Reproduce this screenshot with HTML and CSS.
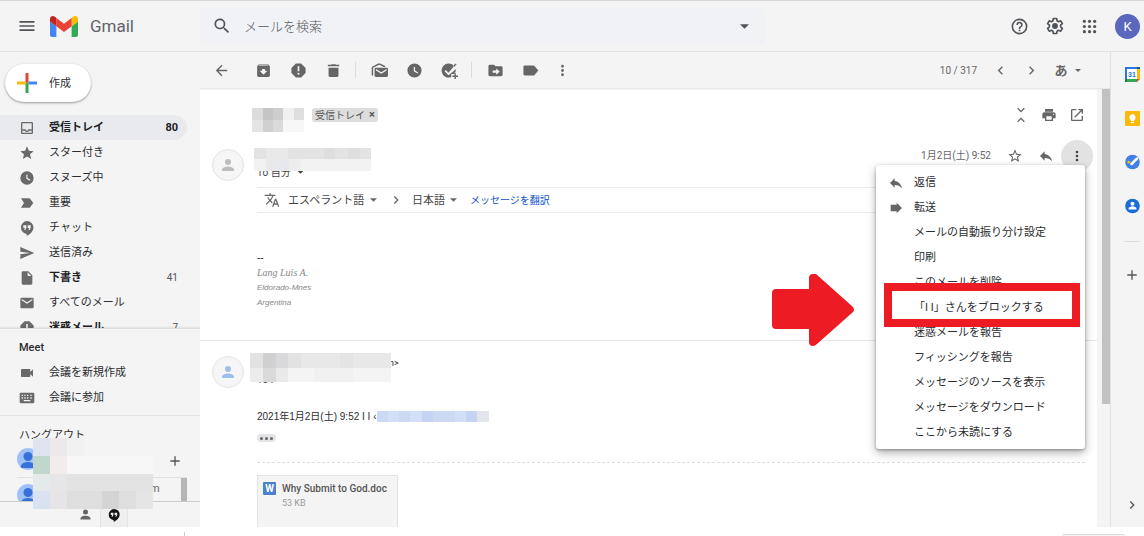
FILE: index.html
```html
<!DOCTYPE html>
<html lang="ja">
<head>
<meta charset="utf-8">
<title>Gmail</title>
<link rel="stylesheet" href="styles.css">
</head>
<body>
<svg class="sprite" aria-hidden="true">
  <symbol id="caret" viewBox="0 0 8 4"><path d="M0 0h8L4 4z"/></symbol>
  <symbol id="person" viewBox="0 0 24 24"><path d="M12 12a4 4 0 1 0 0-8 4 4 0 0 0 0 8zm0 2c-2.700 0-8 1.300-8 4v2h16v-2c0-2.700-5.300-4-8-4z"/></symbol>
  <symbol id="reply" viewBox="0 0 24 24"><path d="M10 9V5l-7 7 7 7v-4.100c5 0 8.500 1.600 11 5.100-1-5-4-10-11-11z"/></symbol>
  <symbol id="more" viewBox="0 0 24 24"><path d="M12 8a2 2 0 1 0 0-4 2 2 0 0 0 0 4zm0 2a2 2 0 1 0 0 4 2 2 0 0 0 0-4zm0 6a2 2 0 1 0 0 4 2 2 0 0 0 0-4z"/></symbol>
  <symbol id="clock" viewBox="0 0 24 24"><path d="M12 2a10 10 0 1 0 0 20 10 10 0 0 0 0-20zm4.200 14.200L11 13V7h1.800v5.100l4.300 2.600z"/></symbol>
  <symbol id="right" viewBox="0 0 24 24"><path d="M10 6 8.600 7.400l4.600 4.600-4.600 4.600L10 18l6-6z"/></symbol>
  <symbol id="plus" viewBox="0 0 24 24"><path d="M19 13h-6v6h-2v-6H5v-2h6V5h2v6h6z"/></symbol>
  <symbol id="spam" viewBox="0 0 24 24"><path d="M15.700 2H8.300L2 8.300v7.400L8.300 22h7.400l6.300-6.300V8.300zM12 18a1.500 1.500 0 1 1 0-3 1.500 1.500 0 0 1 0 3zm1.200-5h-2.400V6h2.400z"/></symbol>
  <symbol id="hangouts" viewBox="0 0 24 24"><path d="M12 1.500a9.800 9.800 0 0 0-.500 19.500v3c5.500-2.600 10.200-7.400 10.200-12.700A9.700 9.700 0 0 0 12 1.500zM11 11.800 9.500 15H7.800l1-3H6.500V8H11zm6.500 0L16 15h-1.700l1-3H13V8h4.500z"/></symbol>
</svg>

<header class="topbar">
  <div class="brand">
    <button class="icon-btn menu-btn" aria-label="メインメニュー"><svg width="20" height="20" viewBox="0 0 24 24"><path d="M3 18h18v-2H3zm0-5h18v-2H3zm0-7v2h18V6z"/></svg></button>
    <svg class="logo" viewBox="52 42 88 66"><path fill="#4285f4" d="M58 108h14V74L52 59v43c0 3.300 2.700 6 6 6"/><path fill="#34a853" d="M120 108h14c3.300 0 6-2.700 6-6V59l-20 15"/><path fill="#fbbc04" d="M120 48v26l20-15v-8c0-7.400-8.500-11.700-14.400-7.200"/><path fill="#ea4335" d="M72 74V48l24 18 24-18v26L96 92"/><path fill="#c5221f" d="M52 51v8l20 15V48l-5.600-4.200C60.500 39.400 52 43.600 52 51"/></svg>
    <span class="brand-name">Gmail</span>
  </div>
  <form class="search">
    <button type="button" class="icon-btn" aria-label="検索"><svg width="20" height="20" viewBox="0 0 24 24"><path d="M15.500 14h-.8l-.3-.3A6.500 6.500 0 1 0 13.700 14.400l.3.300v.8l5 5 1.500-1.500zm-6 0a4.500 4.500 0 1 1 0-9 4.500 4.500 0 0 1 0 9z"/></svg></button>
    <input type="text" placeholder="メールを検索" aria-label="メールを検索">
    <button type="button" class="icon-btn" aria-label="検索オプション"><svg width="9" height="5" viewBox="0 0 8 4"><path d="M0 0h8L4 4z"/></svg></button>
  </form>
  <div class="account">
    <button class="icon-btn" aria-label="サポート"><svg width="19" height="19" viewBox="0 0 24 24"><path d="M11 18h2v-2h-2zm1-16a10 10 0 1 0 0 20 10 10 0 0 0 0-20zm0 18a8 8 0 1 1 0-16 8 8 0 0 1 0 16zm0-14a4 4 0 0 0-4 4h2a2 2 0 1 1 4 0c0 2-3 1.800-3 5h2c0-2.300 3-2.500 3-5a4 4 0 0 0-4-4z"/></svg></button>
    <button class="icon-btn" aria-label="設定"><svg width="20" height="20" viewBox="0 0 24 24"><path fill="none" stroke="currentColor" stroke-width="2" stroke-linejoin="round" d="M10 3h4l.5 2.800 1.700 1 2.700-1 2 3.400-2.200 1.800v2l2.200 1.800-2 3.400-2.700-1-1.700 1L14 21h-4l-.5-2.800-1.700-1-2.700 1-2-3.400L5.300 13v-2L3.100 9.200l2-3.400 2.700 1 1.700-1z"/><circle cx="12" cy="12" r="3.500"/></svg></button>
    <button class="icon-btn" aria-label="Google アプリ"><svg width="19" height="19" viewBox="0 0 24 24"><circle cx="5.500" cy="5.500" r="2"/><circle cx="12" cy="5.500" r="2"/><circle cx="18.500" cy="5.500" r="2"/><circle cx="5.500" cy="12" r="2"/><circle cx="12" cy="12" r="2"/><circle cx="18.500" cy="12" r="2"/><circle cx="5.500" cy="18.500" r="2"/><circle cx="12" cy="18.500" r="2"/><circle cx="18.500" cy="18.500" r="2"/></svg></button>
    <button class="profile" aria-label="Google アカウント">K</button>
  </div>
</header>

<div class="app">
  <aside class="sidebar">
    <button class="compose"><svg width="20" height="20" viewBox="0 0 20 20"><path fill="#ea4335" d="M8.500 0h3v8.500l-3 3z"/><path fill="#fbbc04" d="M0 8.500h8.500v3H0z"/><path fill="#4285f4" d="M11.500 8.500H20v3h-8.500z"/><path fill="#34a853" d="M8.500 11.500l3-3V20h-3z"/></svg>作成</button>
    <nav class="folders">
      <a class="folder active" href="#"><svg viewBox="0 0 24 24"><path d="M19 3H5a2 2 0 0 0-2 2v14c0 1.100.9 2 2 2h14a2 2 0 0 0 2-2V5a2 2 0 0 0-2-2zm0 16H5v-3h3.600a4 4 0 0 0 6.800 0H19zm0-5h-5a2 2 0 1 1-4 0H5V5h14z"/></svg><span>受信トレイ</span><b>80</b></a>
      <a class="folder" href="#"><svg viewBox="0 0 24 24"><path d="m12 17.300 6.200 3.700-1.700-7L22 9.200l-7.200-.6L12 2 9.200 8.600 2 9.200 7.500 14l-1.700 7z"/></svg><span>スター付き</span></a>
      <a class="folder" href="#"><svg viewBox="0 0 24 24"><use href="#clock"/></svg><span>スヌーズ中</span></a>
      <a class="folder" href="#"><svg viewBox="0 0 24 24"><path d="M3 19h12c.7 0 1.300-.3 1.600-.8L21.500 12l-4.900-6.200A2 2 0 0 0 15 5H3l4.500 7z"/></svg><span>重要</span></a>
      <a class="folder" href="#"><svg viewBox="0 0 24 24"><use href="#hangouts"/></svg><span>チャット</span></a>
      <a class="folder" href="#"><svg viewBox="0 0 24 24"><path d="M2 21 23 12 2 3v7l15 2-15 2z"/></svg><span>送信済み</span></a>
      <a class="folder unread" href="#"><svg viewBox="0 0 24 24"><path d="M14 2H6a2 2 0 0 0-2 2v16c0 1.100.9 2 2 2h12a2 2 0 0 0 2-2V8zm-1 7V3.500L18.500 9z"/></svg><span>下書き</span><i>41</i></a>
      <a class="folder" href="#"><svg viewBox="0 0 24 24"><path d="M20 4H4a2 2 0 0 0-2 2v12c0 1.100.9 2 2 2h16a2 2 0 0 0 2-2V6a2 2 0 0 0-2-2zm0 4-8 5-8-5V6l8 5 8-5z"/></svg><span>すべてのメール</span></a>
      <a class="folder unread" href="#"><svg viewBox="0 0 24 24"><use href="#spam"/></svg><span>迷惑メール</span><i>7</i></a>
    </nav>
    <section class="meet">
      <h2>Meet</h2>
      <a class="folder" href="#"><svg viewBox="0 0 24 24"><path d="M17 10.500V7a1 1 0 0 0-1-1H4a1 1 0 0 0-1 1v10c0 .6.400 1 1 1h12c.6 0 1-.4 1-1v-3.500l4 4v-11z"/></svg><span>会議を新規作成</span></a>
      <a class="folder" href="#"><svg viewBox="0 0 24 24"><path fill-rule="evenodd" d="M3 4h18a2 2 0 0 1 2 2v12a2 2 0 0 1-2 2H3a2 2 0 0 1-2-2V6c0-1.100.9-2 2-2zm1 3v2h2V7zm4 0v2h2V7zm4 0v2h2V7zm5 0v2h2V7zM4 11v2h2v-2zm4 0v2h2v-2zm4 0v2h2v-2zm5 0v2h2v-2zM7 15v2h10v-2z"/></svg><span>会議に参加</span></a>
    </section>
    <section class="hangouts">
      <h2>ハングアウト</h2>
      <div class="contacts">
        <div class="contact"><span class="face"><svg viewBox="0 0 22 22"><circle cx="11" cy="8.500" r="4.500"/><path d="M3.500 20c0-8 15-8 15 0z"/></svg></span><button class="icon-btn" aria-label="新しい会話"><svg width="16" height="16"><use href="#plus"/></svg></button></div>
        <div class="contact second"><span class="face"><svg viewBox="0 0 22 22"><circle cx="11" cy="8.500" r="4.500"/><path d="M3.500 20c0-8 15-8 15 0z"/></svg></span><span class="tail">m</span><span class="thumb"></span></div>
      </div>
      <svg class="mosaic" width="120" height="71" viewBox="0 0 120 71" shape-rendering="crispEdges"><path fill="#f4f4f4" d="M0 0h120v71H0z"/><path fill="#e0e4f0" d="M0 0h17v18H0z"/><path fill="#ede9ea" d="M17 0h17v18H17z"/><path fill="#f1f1f1" d="M34 0h17v18H34z"/><path fill="#c1d7cd" d="M0 18h17v18H0z"/><path fill="#f2edec" d="M17 18h17v18H17z"/><path fill="#f7f7f7" d="M34 18h86v18H34z"/><path fill="#e4eae9" d="M0 36h17v17H0z"/><path fill="#e6e6e8" d="M17 36h17v17H17z"/><path fill="#e3e3e3" d="M34 36h86v17H34z"/><path fill="#dae2f2" d="M0 53h17v18H0z"/><path fill="#e6e4e6" d="M17 53h17v18H17z"/><path fill="#dedede" d="M34 53h35v18H34z"/><path fill="#d4d4d4" d="M69 53h17v18H69z"/><path fill="#dedede" d="M86 53h17v18H86z"/><path fill="#e5e5e5" d="M103 53h17v18h-17z"/></svg>
    </section>
    <div class="tabs">
      <button class="icon-btn" aria-label="連絡先"><svg width="15" height="15"><use href="#person"/></svg></button>
      <button class="icon-btn on" aria-label="ハングアウト"><svg width="14" height="14"><use href="#hangouts"/></svg></button>
    </div>
  </aside>

  <main class="main">
    <div class="toolbar">
      <button class="icon-btn back" aria-label="戻る"><svg viewBox="0 0 24 24"><path d="M20 11H7.800l5.600-5.600L12 4l-8 8 8 8 1.400-1.400L7.800 13H20z"/></svg></button>
      <button class="icon-btn" aria-label="アーカイブ"><svg viewBox="0 0 24 24"><path fill-rule="evenodd" d="M5.500 3h13L21 6v13a2 2 0 0 1-2 2H5a2 2 0 0 1-2-2V6zm.4 1-.9 1h14l-1-1zM12 18l5.500-5.500H14V10h-4v2.500H6.500z"/></svg></button>
      <button class="icon-btn" aria-label="迷惑メールを報告"><svg><use href="#spam"/></svg></button>
      <button class="icon-btn" aria-label="削除"><svg viewBox="0 0 24 24"><path d="M5 8h14v11a2 2 0 0 1-2 2H7a2 2 0 0 1-2-2zm10.500-4-1-1h-5l-1 1H4v2h16V4z"/></svg></button>
      <span class="sep"></span>
      <button class="icon-btn" aria-label="未読にする"><svg viewBox="0 0 24 24"><path d="M22 8H7a2 2 0 0 0-2 2v9c0 1.100.9 2 2 2h15a2 2 0 0 0 2-2v-9a2 2 0 0 0-2-2zm0 4-7.500 4.500L7 12v-2l7.500 4.500L22 10zM3 19H1V7l9-5h3l7 3.500V7h-2l-6.500-3L3 8z"/></svg></button>
      <button class="icon-btn" aria-label="スヌーズ"><svg><use href="#clock"/></svg></button>
      <button class="icon-btn" aria-label="ToDo リストに追加"><svg viewBox="0 0 24 24"><path fill-rule="evenodd" d="M11 2a10 10 0 1 0 3.500 19.300V17h4.300v-2H20a10 10 0 0 0 .8-5L18 12.800l-7.500 6L5 13l1.800-1.800 3.700 3.800L18 6.500V5a10 10 0 0 0-7-3zM20.500 2 22 3.500l-4 4L16.500 6zM19 16h2v3h3v2h-3v3h-2v-3h-3v-2h3z"/></svg></button>
      <span class="sep"></span>
      <button class="icon-btn" aria-label="移動"><svg viewBox="0 0 24 24"><path d="M20 6h-8l-2-2H4a2 2 0 0 0-2 2v12c0 1.100.9 2 2 2h16a2 2 0 0 0 2-2V8a2 2 0 0 0-2-2zm-7 12v-3H8v-3h5V9l5 4.500z"/></svg></button>
      <button class="icon-btn" aria-label="ラベル"><svg viewBox="0 0 24 24"><path d="M17.600 5.800A2 2 0 0 0 16 5H4a2 2 0 0 0-2 2v10c0 1.100.9 2 2 2h12c.7 0 1.300-.3 1.600-.8L23 12z"/></svg></button>
      <button class="icon-btn narrow" aria-label="その他"><svg><use href="#more"/></svg></button>
      <span class="pager">10 / 317</span>
      <button class="icon-btn nav-btn" aria-label="新しい"><svg viewBox="0 0 24 24"><path d="M15.400 7.400 14 6l-6 6 6 6 1.400-1.400-4.600-4.600z"/></svg></button>
      <button class="icon-btn nav-btn" aria-label="古い"><svg><use href="#right"/></svg></button>
      <button class="icon-btn ime">あ<svg class="caret"><use href="#caret"/></svg></button>
    </div>

    <div class="reader">
      <div class="paper">
        <div class="subject">
          <svg width="52" height="24" viewBox="0 0 52 24" shape-rendering="crispEdges"><path fill="#dcdcdc" d="M0 0h11v12H0z"/><path fill="#c5c5c5" d="M11 0h10v12H11z"/><path fill="#cecece" d="M21 0h10v12H21z"/><path fill="#f0f0f0" d="M31 0h11v12H31z"/><path fill="#dedede" d="M42 0h10v12H42z"/><path fill="#e4e4e4" d="M0 12h11v12H0z"/><path fill="#d0d0d0" d="M11 12h10v12H11z"/><path fill="#dadada" d="M21 12h10v12H21z"/><path fill="#f7f7f7" d="M31 12h21v12H31z"/></svg>
          <span class="chip">受信トレイ<button aria-label="ラベルを削除">×</button></span>
          <div class="actions">
            <button class="icon-btn" aria-label="すべて折りたたむ"><svg viewBox="0 0 24 24"><path fill="none" stroke="currentColor" stroke-width="2" d="m7 2 5 5 5-5M7 22l5-5 5 5"/></svg></button>
            <button class="icon-btn" aria-label="すべて印刷"><svg viewBox="0 0 24 24"><path d="M19 8H5a3 3 0 0 0-3 3v6h4v4h12v-4h4v-6a3 3 0 0 0-3-3zm-3 11H8v-5h8zm3-7a1 1 0 1 1 0-2 1 1 0 0 1 0 2zm-1-9H6v4h12z"/></svg></button>
            <button class="icon-btn" aria-label="新しいウィンドウで開く"><svg viewBox="0 0 24 24"><path d="M19 19H5V5h6V3H5a2 2 0 0 0-2 2v14c0 1.100.9 2 2 2h14a2 2 0 0 0 2-2v-6h-2zM14 3v2h3.600l-9.800 9.800 1.400 1.400L19 6.400V10h2V3z"/></svg></button>
          </div>
        </div>

        <article class="message">
          <header class="msg-head">
            <span class="avatar"><svg><use href="#person"/></svg></span>
            <div class="sender">
              <div class="from"></div>
              <button class="to">To 自分<svg class="caret"><use href="#caret"/></svg></button>
              <svg class="mosaic" width="117" height="23" viewBox="0 0 117 23" shape-rendering="crispEdges"><path fill="#e3e3e3" d="M0 0h117v11H0z"/><path fill="#e9e9e9" d="M12 0h22v11H12z"/><path fill="#dedede" d="M70 0h11v11H70zM94 0h12v11H94z"/><path fill="#f2f2f2" d="M0 11h117v12H0z"/><path fill="#e9e9eb" d="M12 11h12v12H12z"/><path fill="#e7e8ee" d="M24 11h11v12H24z"/><path fill="#ededed" d="M35 11h12v12H35z"/></svg>
            </div>
            <div class="meta">
              <time>1月2日(土) 9:52</time>
              <button class="icon-btn" aria-label="スター"><svg viewBox="0 0 24 24"><path d="m22 9.200-7.200-.6L12 2 9.200 8.600 2 9.200 7.500 14l-1.700 7 6.200-3.700 6.200 3.700-1.600-7zm-10 6.200-3.800 2.300 1-4.300-3.300-2.900 4.400-.4L12 6.100l1.700 4 4.400.4-3.300 2.900 1 4.300z"/></svg></button>
              <button class="icon-btn" aria-label="返信"><svg><use href="#reply"/></svg></button>
              <div class="more-wrap">
                <button class="icon-btn more-btn" aria-label="その他"><svg><use href="#more"/></svg></button>
                <div class="menu" role="menu">
                  <button role="menuitem"><svg><use href="#reply"/></svg>返信</button>
                  <button role="menuitem"><svg viewBox="0 0 24 24"><path d="M13 4v3H4v10h9v3l8-8z"/></svg>転送</button>
                  <button role="menuitem">メールの自動振り分け設定</button>
                  <button role="menuitem">印刷</button>
                  <button role="menuitem">このメールを削除</button>
                  <button role="menuitem" class="block">「I I」さんをブロックする</button>
                  <button role="menuitem">迷惑メールを報告</button>
                  <button role="menuitem">フィッシングを報告</button>
                  <button role="menuitem">メッセージのソースを表示</button>
                  <button role="menuitem">メッセージをダウンロード</button>
                  <button role="menuitem">ここから未読にする</button>
                  <svg class="pointer" viewBox="0 0 82 72"><path fill="#ed1c24" d="M4 15h33V4q0-4 4-4h3l37 33q2 3 0 5L45 70q-2 2-4 2-4 0-4-4V55H4q-4 0-4-4V19q0-4 4-4z"/></svg>
                </div>
              </div>
            </div>
          </header>
          <div class="translate">
            <svg width="16" height="16" viewBox="0 0 24 24"><path d="m12.900 15.100-2.600-2.500A17.500 17.500 0 0 0 14 6h3V4h-7V2H8v2H1v2h11.200A16 16 0 0 1 9 11.400 15.700 15.700 0 0 1 6.700 8h-2c.7 1.600 1.700 3.200 3 4.600l-5.100 5L4 19l5-5 3.100 3.100zM18.500 10h-2L12 22h2l1.100-3h4.800l1.100 3h2zm-2.600 7 1.600-4.300 1.600 4.300z"/></svg>
            <label class="picker"><select aria-label="翻訳元の言語"><option>エスペラント語</option></select><svg class="caret"><use href="#caret"/></svg></label>
            <svg class="arrow" width="16" height="16"><use href="#right"/></svg>
            <label class="picker"><select aria-label="翻訳先の言語"><option>日本語</option></select><svg class="caret"><use href="#caret"/></svg></label>
            <a href="#">メッセージを翻訳</a>
          </div>
          <div class="msg-body signature">
            <p class="dashes">--</p>
            <p class="name">Lang Luis A.</p>
            <p>Eldorado-Mnes</p>
            <p>Argentina</p>
          </div>
        </article>

        <article class="message next">
          <header class="msg-head">
            <span class="avatar blue"><svg><use href="#person"/></svg></span>
            <div class="sender">
              <div class="from">m&gt;</div>
              <div class="to">To :</div>
              <svg class="mosaic" width="141" height="29" viewBox="0 0 141 29" shape-rendering="crispEdges"><path fill="#e8e8e8" d="M0 0h141v15H0z"/><path fill="#e2e2e2" d="M0 0h13v15H0z"/><path fill="#d0d0d0" d="M13 0h13v15H13z"/><path fill="#d9d9dc" d="M26 0h12v15H26z"/><path fill="#e2e2e2" d="M38 0h13v15H38z"/><path fill="#e4e4e4" d="M90 0h13v15H90z"/><path fill="#f4f4f4" d="M0 15h141v14H0z"/><path fill="#ececec" d="M0 15h13v14H0z"/><path fill="#dadada" d="M13 15h13v14H13z"/><path fill="#e9e9e9" d="M26 15h12v14H26z"/><path fill="#f0f0f0" d="M64 15h39v14H64z"/></svg>
            </div>
          </header>
          <div class="msg-body quoted">
            <p>2021年1月2日(土) 9:52 I I ‹<svg class="address" width="112" height="11" viewBox="0 0 112 11" shape-rendering="crispEdges"><path fill="#ccd9f2" d="M0 0h112v11H0z"/><path fill="#d3dff6" d="M11 0h11v11H11zM33 0h12v11H33zM78 0h11v11H78z"/><path fill="#c5d4f2" d="M45 0h11v11H45zM89 0h11v11H89z"/><path fill="#e3e5ec" d="M100 0h12v11h-12z"/></svg></p>
            <button class="ellipsis" aria-label="省略部分を表示"><span></span><span></span><span></span></button>
          </div>
          <div class="attachments">
            <a class="file" href="#"><span class="doc">W</span><span><strong>Why Submit to God.doc</strong><small>53 KB</small></span></a>
          </div>
        </article>
      </div>
      <div class="scrollbar"><span></span></div>
    </div>
  </main>

  <aside class="addons">
    <button class="icon-btn" aria-label="カレンダー"><svg viewBox="0 0 16 16"><path fill="#2a75e0" d="M1 1h12v2H3v10H1z"/><path fill="#1554ae" d="M13 1h3v2h-3z"/><path fill="#fbbc04" d="M13 3h3v10h-3z"/><path fill="#34a853" d="M3 13h10v3H3z"/><path fill="#188038" d="M1 13h2v3H1z"/><path fill="#ea4335" d="M13 13h3l-3 3z"/><path fill="#fff" d="M3 3h10v10H3z"/><text x="8" y="11" text-anchor="middle">31</text></svg></button>
    <button class="icon-btn" aria-label="Keep"><svg viewBox="0 0 16 16"><rect x="1" y="1" width="15" height="15" rx="1" fill="#fbb90a"/><path fill="#fff" d="M8.500 4a3.300 3.300 0 0 0-1.700 6v1h3.400v-1a3.300 3.300 0 0 0-1.700-6zM7 12h3v1H7z"/></svg></button>
    <button class="icon-btn" aria-label="ToDo リスト"><svg viewBox="0 0 16 16"><circle cx="8.500" cy="8" r="7.300" fill="#4280e8"/><path stroke="#fff" stroke-width="2.500" stroke-linecap="round" d="m7.500 10 5.500-5.500"/><circle cx="4.800" cy="8.200" r="1.400" fill="#fbbc04"/></svg></button>
    <button class="icon-btn" aria-label="連絡先"><svg viewBox="0 0 16 16"><circle cx="8.500" cy="8" r="7.300" fill="#1a6dd8"/><circle cx="8.500" cy="5.800" r="2" fill="#fff"/><path fill="#fff" d="M4.500 11c0-3.600 8-3.600 8 0v.5h-8z"/></svg></button>
    <hr>
    <button class="icon-btn add" aria-label="アドオンを取得"><svg><use href="#plus"/></svg></button>
    <button class="icon-btn collapse" aria-label="サイドパネルを非表示"><svg><use href="#right"/></svg></button>
  </aside>
</div>
<div class="edge"><span class="tick"></span><span class="tab"></span></div>
</body>
</html>
```

FILE: styles.css
```css
* { box-sizing: border-box; }

body {
  margin: 0;
  height: 100vh;
  display: flex;
  flex-direction: column;
  overflow: hidden;
  background: #fff;
  color: #2c2d30;
  font: 400 11px/15px Roboto, "Noto Sans CJK JP", sans-serif;
}

button, input, select { font: inherit; color: inherit; }
button { padding: 0; border: 0; background: none; }
a { color: inherit; text-decoration: none; }
p, h2 { margin: 0; }
svg { display: block; flex: none; fill: currentColor; }
.sprite { display: none; }
.caret { width: 7px; height: 4px; }
.mosaic { position: absolute; }

.icon-btn {
  display: flex;
  flex: none;
  align-items: center;
  justify-content: center;
}

/* Top bar */
.topbar {
  flex: none;
  display: flex;
  align-items: center;
  height: 52px;
  border-top: 1px solid #d2d5da;
  border-bottom: 1px solid #e3e4e8;
  background: #f4f4f4;
  color: #505357;
}
.brand { display: flex; align-items: center; width: 200px; flex: none; }
.menu-btn { margin-left: 17px; }
.logo { width: 28px; height: 21px; margin-left: 13px; }
.brand-name { margin-left: 12px; font-size: 17px; line-height: 20px; color: #5f6368; }
.search {
  display: flex;
  align-items: center;
  flex: 0 1 565px;
  height: 36px;
  padding: 0 12px;
  border-radius: 4px;
  background: #f1f2f5;
}
.search input {
  flex: 1;
  min-width: 0;
  margin-left: 12px;
  padding: 0;
  border: 0;
  outline: 0;
  background: none;
  font-size: 13px;
  font-weight: 300;
}
.search input::placeholder { color: #54575b; opacity: 1; }
.search .icon-btn:last-child { width: 18px; }
.account { display: flex; align-items: center; margin-left: auto; padding-right: 4px; }
.account .icon-btn { width: 35px; height: 35px; }
.profile {
  width: 25px;
  height: 25px;
  margin-left: 8px;
  border-radius: 50%;
  background: #5a67bd;
  color: #fff;
  font-size: 13px;
}

.app { flex: 1; display: flex; min-height: 0; }

/* Sidebar */
.sidebar {
  display: flex;
  flex-direction: column;
  width: 200px;
  flex: none;
  background: #f4f4f4;
}
.compose {
  display: flex;
  align-items: center;
  align-self: flex-start;
  flex: none;
  gap: 12px;
  height: 38px;
  margin: 12px 0 13px 5px;
  padding: 0 20px 0 12px;
  border-radius: 19px;
  background: #fff;
  box-shadow: 0 1px 2px rgba(60, 64, 67, .4), 0 1px 3px rgba(60, 64, 67, .15);
}
.folders { flex: 1; min-height: 0; overflow: hidden; }
.folder {
  display: flex;
  align-items: center;
  gap: 14px;
  height: 25px;
  margin-right: 13px;
  padding: 0 9px 0 19px;
}
.folder svg { width: 16px; height: 16px; color: #6a6a6a; }
.folder span { flex: 1; white-space: nowrap; }
.folder b, .folder i { font-style: normal; font-weight: 400; color: #555; }
.folder i { font-size: 10px; }
.folder.active { border-radius: 0 13px 13px 0; background: #e8eaed; }
.active span, .unread span, .folder.active b { font-weight: 700; color: #202124; }
.meet {
  padding: 6px 0 5px;
  border-top: 1px solid #dcdde0;
  border-bottom: 1px solid #dfe1e5;
  box-shadow: 0 -1px 2px rgba(0, 0, 0, .08);
}
.sidebar h2 { height: 25px; padding-left: 19px; font-size: 11px; font-weight: 500; line-height: 25px; }
.hangouts { position: relative; padding-top: 7px; }
.sidebar .hangouts h2 { font-weight: 400; }
.contacts { height: 53px; padding-left: 17px; overflow: hidden; }
.contact { display: flex; align-items: center; height: 29px; padding-right: 17px; padding-bottom: 7px; }
.contact .icon-btn { margin-left: auto; padding-top: 3px; color: #555; }
.contact.second {
  align-items: flex-start;
  height: 24px;
  padding: 6px 0 0;
  margin-right: 13px;
  border-top: 1px solid #dfe1e5;
}
.face { width: 22px; height: 22px; border-radius: 50%; background: #a0c1f8; color: #3770d8; overflow: hidden; flex: none; }
.tail { margin: -3px 0 0 111px; color: #666; }
.thumb { width: 6px; height: 24px; margin: -6px 0 0 auto; background: #b5b5b5; }
.hangouts .mosaic { left: 33px; top: 22px; z-index: 1; }
.tabs {
  display: flex;
  height: 26px;
  padding-left: 70px;
  border-top: 1px solid #ccc;
}
.tabs .icon-btn { width: 30px; color: #666; }
.tabs .on { width: 28px; color: #111; border: 1px solid #e4e4e4; border-width: 0 1px; background: #efefef; }

/* Toolbar */
.main { flex: 1; min-width: 0; display: flex; flex-direction: column; }
.toolbar {
  display: flex;
  align-items: center;
  flex: none;
  height: 37px;
  padding-left: 4px;
  padding-right: 29px;
  border-bottom: 1px solid #e6e7ea;
  background: #f4f4f4;
  color: #666;
}
.toolbar .icon-btn { width: 35px; height: 30px; }
.toolbar svg { width: 17px; height: 17px; }
.toolbar .back { width: 34px; margin-right: 8px; }
.toolbar .narrow { width: 28px; }
.sep { width: 1px; height: 16px; margin: 0 6px 0 4px; background: #dcdcdc; }
.pager { margin-left: auto; margin-right: 8px; font-size: 10px; }
.toolbar .nav-btn { width: 31px; }
.toolbar .ime { gap: 7px; margin-left: 7px; width: 27px; font-size: 13px; font-weight: 700; }
.toolbar .caret { width: 6px; height: 3px; }

/* Reading pane */
.reader { flex: 1; min-height: 0; display: flex; overflow: hidden; background: #f4f4f4; }
.paper { flex: 1; min-width: 0; margin-top: 1px; background: #fff; }
.scrollbar { width: 13px; flex: none; padding-left: 5px; }
.scrollbar span { display: block; height: 72%; background: #c1c1c1; }
.subject { display: flex; align-items: center; height: 50px; padding: 0 6px 0 52px; gap: 8px; }
.subject > svg { margin-top: 10px; }
.chip {
  display: flex;
  align-items: center;
  gap: 4px;
  height: 14px;
  padding: 0 3px;
  border-radius: 3px;
  background: #ddd;
  color: #555;
  font-size: 10px;
}
.chip button { line-height: 14px; font-size: 11px; font-weight: 700; }
.actions { display: flex; margin-left: auto; color: #666; }
.actions .icon-btn { width: 28px; }
.actions svg, .meta svg { width: 16px; height: 16px; }

.message { display: flex; flex-direction: column; }
.message.next { border-top: 1px solid #e6e6e6; }
.msg-head { display: flex; height: 47px; padding: 0 4px 0 12px; }
.avatar {
  display: flex;
  align-items: center;
  justify-content: center;
  flex: none;
  width: 32px;
  height: 32px;
  margin-top: 9px;
  border: 1px solid #e4e4e6;
  border-radius: 50%;
  background: #f6f6f6;
  color: #bdbdbd;
}
.avatar svg { width: 18px; height: 18px; }
.avatar.blue { margin-top: 15px; color: #9dbcf0; }
.sender { position: relative; margin-left: 13px; padding-top: 9px; }
.from { height: 15px; }
.to { display: flex; align-items: center; gap: 6px; height: 16px; font-size: 10px; color: #444; }
.sender .mosaic { left: -3px; top: 8px; }
.next .sender { padding-top: 15px; }
.next .from { padding-left: 129px; font-size: 9px; }
.next .sender .mosaic { left: -7px; top: 12px; }
.meta { display: flex; align-items: flex-start; margin-left: auto; color: #666; }
.meta time { margin-right: 8px; font-size: 10px; line-height: 32px; }
.meta .icon-btn { width: 31px; height: 32px; }
.more-wrap { position: relative; }
.meta .more-btn { width: 32px; border-radius: 50%; background: #e2e2e2; color: #444; }

.menu {
  position: absolute;
  z-index: 2;
  top: 25px;
  right: 8px;
  width: 209px;
  padding: 5px 0 4px;
  border-radius: 3px;
  background: #fff;
  color: #2c2d30;
  box-shadow: 0 4px 10px rgba(0, 0, 0, .3), 0 1px 3px rgba(0, 0, 0, .3);
}
.menu button {
  display: flex;
  align-items: center;
  width: 100%;
  height: 25px;
  padding-left: 38px;
  white-space: nowrap;
}
.menu button svg { width: 16px; height: 16px; margin-left: -26px; margin-right: 10px; color: #666; }
.menu .block { position: relative; }
.menu .block::after {
  content: "";
  position: absolute;
  inset: -12px 5px -7px 8px;
  border: 8px solid #ed1c24;
  pointer-events: none;
}
.menu .pointer { position: absolute; left: -104px; top: 109px; width: 82px; height: 72px; }

.translate {
  display: flex;
  align-items: center;
  height: 26px;
  margin: 0 12px 0 57px;
  padding-left: 7px;
  border: 1px solid #ececec;
  border-width: 1px 0;
}
.translate svg { color: #666; }
.picker { display: flex; align-items: center; gap: 5px; margin-left: 8px; }
.picker select { appearance: none; padding: 0; border: 0; background: none; color: #444; }
.translate .arrow { margin: 0 0 0 11px; }
.translate a { margin-left: 13px; font-size: 10px; color: #1155cc; }

.msg-body { padding-left: 57px; }
.signature {
  padding-top: 37px;
  padding-bottom: 30px;
  font: 400 8px/15px "Liberation Sans", Arial, sans-serif;
  font-style: italic;
  color: #888;
}
.signature .dashes { font-size: 10px; font-style: normal; color: #222; }
.signature .name { font-family: "Liberation Serif", serif; font-size: 10px; }
.quoted { padding-top: 21px; font-family: "Liberation Sans", "Noto Sans CJK JP", sans-serif; font-size: 10px; }
.quoted p { display: flex; align-items: center; white-space: pre; }
.ellipsis {
  display: flex;
  align-items: center;
  justify-content: center;
  gap: 2px;
  width: 19px;
  height: 8px;
  margin-top: 10px;
  border-radius: 4px;
  background: #e4e4e8;
}
.ellipsis span { width: 3px; height: 3px; border-radius: 50%; background: #666; }
.attachments { margin: 20px 12px 0 57px; padding-top: 12px; border-top: 1px dashed #ddd; }
.file {
  display: flex;
  gap: 6px;
  width: 141px;
  height: 90px;
  padding: 6px 5px;
  border: 1px solid #e2e2e2;
  background: #f4f4f4;
}
.doc {
  width: 13px;
  height: 13px;
  border-radius: 1px;
  background: #4a80d0;
  color: #fff;
  font-size: 10px;
  font-weight: 700;
  line-height: 13px;
  text-align: center;
}
.file strong { display: block; font-size: 10px; font-weight: 500; line-height: 13px; color: #555; }
.file small { display: block; font-size: 9px; line-height: 16px; color: #999; }

/* Add-on rail */
.addons {
  display: flex;
  flex-direction: column;
  align-items: center;
  flex: none;
  width: 34px;
  padding-left: 9px;
  padding-top: 14px;
  border-left: 1px solid #e2e2e4;
  background: #f4f4f4;
  color: #555;
}
.addons svg { width: 16px; height: 16px; }
.addons .icon-btn { height: 16px; margin-bottom: 28px; }
.addons text { font: 700 7px "Liberation Sans", sans-serif; fill: #2a75e0; }
.addons hr { width: 16px; margin: -1px 0 25px; border: 0; border-top: 1px solid #dcdcdc; }
.addons .collapse { margin-top: auto; margin-bottom: 14px; }

/* Bottom edge of the window */
.edge { display: flex; justify-content: space-between; align-items: flex-end; flex: none; height: 9px; padding: 0 19px 0 184px; }
.tick { width: 1px; height: 4px; background: #ccc; }
.tab { width: 63px; height: 2px; border-radius: 3px 3px 0 0; border-top: 1px solid #ddd; background: #f4f4f4; }
```
